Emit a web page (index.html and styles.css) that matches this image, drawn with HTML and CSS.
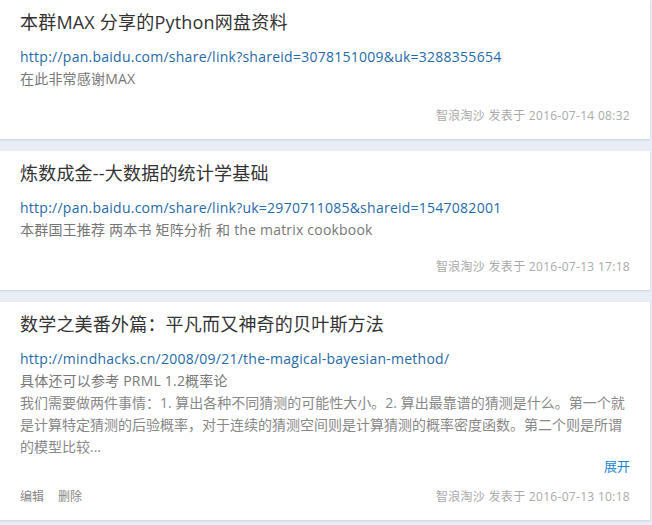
FILE: index.html
```html
<!DOCTYPE html>
<html lang="zh-CN">
<head>
<meta charset="utf-8">
<title>分享</title>
<link rel="stylesheet" href="styles.css">
</head>
<body>
<div class="list">
  <div class="card">
    <h2 class="title">本群MAX 分享的Python网盘资料</h2>
    <a class="link" href="#">http://pan.baidu.com/share/link?shareid=3078151009&amp;uk=3288355654</a>
    <p class="desc">在此非常感谢MAX</p>
    <div class="footer">
      <div class="actions"></div>
      <div class="meta">智浪淘沙 发表于 2016-07-14 08:32</div>
    </div>
  </div>
  <div class="card">
    <h2 class="title">炼数成金--大数据的统计学基础</h2>
    <a class="link" href="#">http://pan.baidu.com/share/link?uk=2970711085&amp;shareid=1547082001</a>
    <p class="desc">本群国王推荐 两本书 矩阵分析 和 the matrix cookbook</p>
    <div class="footer">
      <div class="actions"></div>
      <div class="meta">智浪淘沙 发表于 2016-07-13 17:18</div>
    </div>
  </div>
  <div class="card">
    <h2 class="title">数学之美番外篇：平凡而又神奇的贝叶斯方法</h2>
    <a class="link" href="#">http://mindhacks.cn/2008/09/21/the-magical-bayesian-method/</a>
    <p class="desc">具体还可以参考 PRML 1.2概率论</p>
    <p class="desc body">我们需要做两件事情：1. 算出各种不同猜测的可能性大小。2. 算出最靠谱的猜测是什么。第一个就是计算特定猜测的后验概率，对于连续的猜测空间则是计算猜测的概率密度函数。第二个则是所谓的模型比较...</p>
    <div class="more"><a href="#">展开</a></div>
    <div class="footer footer-tight">
      <div class="actions"><a href="#">编辑</a><a href="#">删除</a></div>
      <div class="meta">智浪淘沙 发表于 2016-07-13 10:18</div>
    </div>
  </div>
</div>
</body>
</html>
```
FILE: styles.css
```css
html, body {
  margin: 0;
  padding: 0;
}
body {
  background: #e9eef6;
  font-family: "Open Sans", "Noto Sans CJK SC", sans-serif;
  width: 652px;
  height: 525px;
  overflow: hidden;
}
.list {
  display: flex;
  flex-direction: column;
  gap: 12px;
  width: 650px;
}
.card {
  background: #fff;
  padding: 10px 20px 13px 20px;
  display: flex;
  flex-direction: column;
  box-shadow: 0 1px 2px rgba(160, 175, 200, 0.45);
}
.title {
  margin: 0;
  font-size: 18px;
  font-weight: normal;
  line-height: 24px;
  color: #333;
  letter-spacing: 0.2px;
}
.link {
  margin-top: 12px;
  font-size: 14px;
  line-height: 22px;
  color: #1f6aa8;
  text-decoration: none;
  letter-spacing: 0.25px;
}
.desc {
  margin: 0;
  font-size: 14px;
  line-height: 22px;
  color: #777;
  letter-spacing: 0.2px;
}
.desc.body {
  color: #888;
  letter-spacing: 0;
}
.more {
  text-align: right;
  font-size: 13px;
  line-height: 16px;
}
.more a {
  color: #1a83cf;
  text-decoration: none;
}
.footer {
  margin-top: 16px;
  display: flex;
  justify-content: space-between;
  align-items: center;
  line-height: 20px;
  font-size: 12px;
}
.footer-tight {
  margin-top: 13px;
}
.actions {
  display: flex;
  gap: 14px;
}
.actions a {
  color: #888;
  text-decoration: none;
  font-size: 12px;
}
.meta {
  color: #aaa;
  font-size: 12px;
  letter-spacing: 0.3px;
}
```
